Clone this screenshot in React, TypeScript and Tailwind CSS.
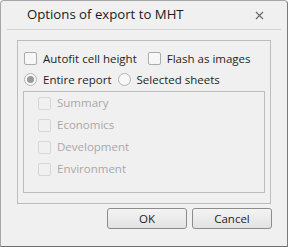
import React from "react";

const font = { fontFamily: '"Open Sans", "Noto Sans", sans-serif' };

const Check = ({ label, disabled }: { label: string; disabled?: boolean }) => (
  <label className="flex items-center gap-[6px]">
    <span
      className={
        "w-[13px] h-[13px] rounded-[2px] border " +
        (disabled ? "border-[#d6d6d6] bg-[#f0f0f0]" : "border-[#acacac] bg-[#f7f7f7]")
      }
    />
    <span className={disabled ? "text-[#a8a8a8]" : "text-[#1e1e1e]"}>{label}</span>
  </label>
);

const Radio = ({ label, checked }: { label: string; checked?: boolean }) => (
  <label className="flex items-center gap-[6px]">
    <span className="w-[13px] h-[13px] rounded-full border border-[#b4b4b4] bg-[#f7f7f7] flex items-center justify-center">
      {checked && <span className="w-[7px] h-[7px] rounded-full bg-[#9a9a9a]" />}
    </span>
    <span className="text-[#1e1e1e]">{label}</span>
  </label>
);

const Button = ({ children }: { children: React.ReactNode }) => (
  <button className="w-[80px] h-[21px] rounded-[3px] border border-[#8c8c8c] bg-gradient-to-b from-[#f4f4f4] to-[#e2e2e2] text-[11.5px] text-[#1e1e1e] leading-none">
    {children}
  </button>
);

export default function App() {
  return (
    <div
      className="w-[288px] h-[247px] bg-[#f0f0f0] border border-[#a6a6a6] border-r-[#7a7a7a] border-b-[#6e6e6e] rounded-t-[4px] flex flex-col text-[11.5px]"
      style={font}
    >
      <div className="h-[28px] flex items-center justify-between pl-[26px] pr-[23px]">
        <span className="text-[13.2px] text-[#1a1a1a]">Options of export to MHT</span>
        <svg width="9" height="9" viewBox="0 0 9 9" className="text-[#6a6a6a]">
          <path d="M1 1L8 8M8 1L1 8" stroke="currentColor" strokeWidth="1.2" />
        </svg>
      </div>
      <div className="mx-[6px] border-t border-[#d2d2d2]" />
      <div className="mt-[10px] ml-[16px] w-[254px] h-[164px] border border-[#bdbdbd] flex flex-col">
        <div className="h-[21px] mt-[7px] flex items-center pl-[6px] gap-[11px]">
          <Check label="Autofit cell height" />
          <Check label="Flash as images" />
        </div>
        <div className="h-[21px] flex items-center pl-[6px] gap-[6px]">
          <Radio label="Entire report" checked />
          <Radio label="Selected sheets" />
        </div>
        <div className="mt-[1px] mx-[5px] h-[102px] border border-[#bdbdbd] flex flex-col pl-[14px]">
          {["Summary", "Economics", "Development", "Environment"].map((s) => (
            <div key={s} className="h-[22px] flex items-center">
              <Check label={s} disabled />
            </div>
          ))}
        </div>
      </div>
      <div className="mt-[4px] flex justify-end gap-[5px] pr-[15px]">
        <Button>OK</Button>
        <Button>Cancel</Button>
      </div>
    </div>
  );
}
